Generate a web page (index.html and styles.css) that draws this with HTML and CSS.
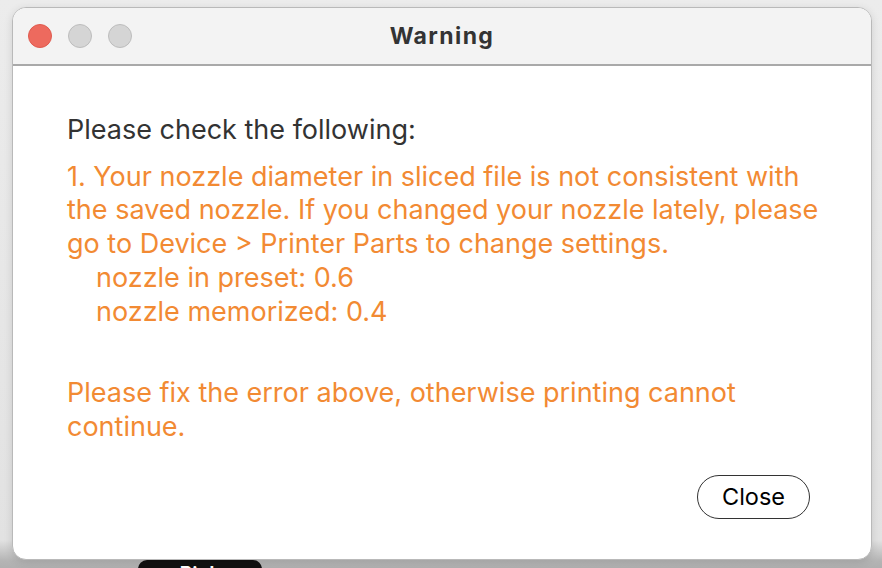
FILE: index.html
```html
<!DOCTYPE html>
<html>
<head>
    <title>Warning</title>
    <link rel="stylesheet" href="styles.css">
</head>
<body>
    <div class="dock-pill"><span>Pick</span></div>

    <div class="window">
        <div class="titlebar">
            <div class="lights">
                <span class="light close-light"></span>
                <span class="light"></span>
                <span class="light"></span>
            </div>
            <div class="title">Warning</div>
        </div>

        <div class="content">
            <p class="intro">Please check the following:</p>
            <p class="error">1. Your nozzle diameter in sliced file is not consistent with the saved nozzle. If you changed your nozzle lately, please go to Device &gt; Printer Parts to change settings.<br>
                <span class="indent">nozzle in preset: 0.6</span><br>
                <span class="indent">nozzle memorized: 0.4</span>
            </p>
            <p class="error fix">Please fix the error above, otherwise printing cannot continue.</p>

            <div class="actions">
                <button class="btn">Close</button>
            </div>
        </div>
    </div>
</body>
</html>
```

FILE: styles.css
```css
html, body {
    margin: 0;
    height: 568px;
    overflow: hidden;
}

body {
    font-family: Inter, "Liberation Sans", sans-serif;
    background: linear-gradient(to bottom, #ececec 0, #e2e2e2 540px, #b4b4b4 561px, #b0b0b0 100%);
    position: relative;
}

.dock-pill {
    position: absolute;
    left: 138px;
    top: 560px;
    width: 124px;
    height: 30px;
    background-color: #111;
    border-radius: 9px;
    color: #fff;
    font-size: 20px;
    font-weight: 600;
    text-align: center;
    line-height: 28px;
}

.window {
    position: relative;
    margin: 7px 0 0 12px;
    width: 858px;
    height: 551px;
    background-color: #fff;
    border: 1px solid #b9b9b9;
    border-radius: 14px;
    overflow: hidden;
    display: flex;
    flex-direction: column;
    box-shadow: 0 2px 8px rgba(0, 0, 0, 0.12);
}

.titlebar {
    height: 56px;
    background-color: #f3f3f3;
    border-bottom: 2px solid #a9a9a9;
    display: flex;
    align-items: center;
    position: relative;
}

.lights {
    display: flex;
    gap: 16px;
    padding-left: 15px;
}

.light {
    width: 22px;
    height: 22px;
    border-radius: 50%;
    background-color: #d5d5d5;
    border: 1px solid #bdbdbd;
}

.close-light {
    background-color: #ed6a5e;
    border-color: #e05a4e;
}

.title {
    position: absolute;
    left: 0;
    right: 0;
    text-align: center;
    font-size: 23px;
    font-weight: 700;
    color: #333;
    letter-spacing: 1.4px;
}

.content {
    flex: 1;
    padding: 47px 30px 0 54px;
    font-size: 27px;
    line-height: 33.7px;
}

.content p {
    margin: 0;
}

.intro {
    color: #333;
    margin-bottom: 13px !important;
}

.error {
    color: #f28a33;
}

.indent {
    padding-left: 29px;
}

.fix {
    margin-top: 48px !important;
}

.actions {
    display: flex;
    justify-content: flex-end;
    padding-right: 31px;
    margin-top: 31px;
}

.btn {
    font-family: Inter, "Liberation Sans", sans-serif;
    font-size: 23.5px;
    color: #000;
    background-color: #fff;
    border: 1.5px solid #333;
    border-radius: 22px;
    width: 113px;
    height: 44px;
    padding: 0;
}
```
